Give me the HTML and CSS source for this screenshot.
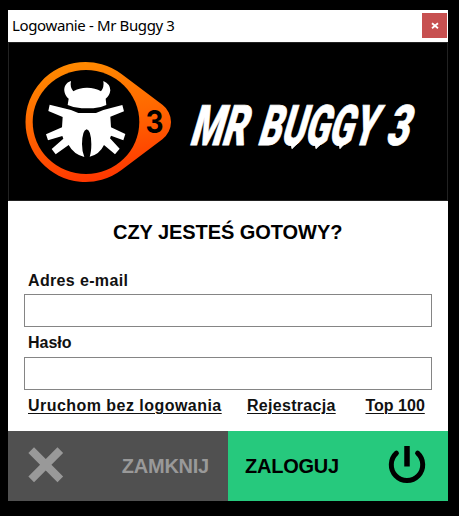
FILE: index.html
```html
<!DOCTYPE html>
<html lang="pl">
<head>
<meta charset="utf-8">
<title>Logowanie - Mr Buggy 3</title>
<link rel="stylesheet" href="styles.css">
</head>
<body>
<main class="window">
  <header class="titlebar">
    <span class="title">Logowanie - Mr Buggy 3</span>
    <button class="close" aria-label="Zamknij okno"><svg width="8" height="8" viewBox="0 0 8 8"><path d="M1 1.3 7 6.3M7 1.3 1 6.3" stroke="#fff" stroke-width="1.8"/></svg></button>
  </header>
  <svg class="banner" width="440" height="159" viewBox="8 42 440 159">
    <defs>
      <linearGradient id="flame" gradientUnits="userSpaceOnUse" x1="75" y1="62" x2="95" y2="182">
        <stop offset="0" stop-color="#ff8a00"/><stop offset=".5" stop-color="#ff6500"/><stop offset="1" stop-color="#ff3600"/>
      </linearGradient>
    </defs>
    <path fill="url(#flame)" d="M121.500 74A60 60 0 1 0 121.500 170L162.400 139.200A21.500 21.500 0 0 0 162.400 104.800Z"/>
    <ellipse cx="86" cy="122" rx="53.300" ry="52"/>
    <g transform="translate(10 50) scale(.33333)" fill="#fff">
      <path d="M183 93C168 98 162 109 163 123Q165 138 176 146L173 165Q192 174 215 175H250Q273 173 289 165L287 146Q299 138 301 121Q301 102 280 93Q283 112 273 124Q256 113 231 113Q207 113 190 124Q179 111 183 93Z"/>
      <path d="M119 164L183 180L205 189H258L280 180L337 165L342 184L301 200L303 232L346 252L340 271L303 257L300 265L329 296L315 313L282 285Q269 313 239 320Q244 306 244 282Q243 240 230 238Q217 240 216 282Q216 305 223 321Q191 313 176 285L137 313L125 297L160 266L157 258L114 271L108 253L156 232L158 201L115 183Z"/>
    </g>
    <text class="badge" x="145.500" y="133" textLength="18" lengthAdjust="spacingAndGlyphs">3</text>
    <g class="wordmark" transform="translate(0 145.200) skewX(-16.500)">
      <text x="188.500" y="0" textLength="56" lengthAdjust="spacingAndGlyphs">MR</text>
      <text x="256.500" y="0" textLength="117" lengthAdjust="spacingAndGlyphs">BUGGY</text>
      <text x="384.500" y="0" textLength="22.500" lengthAdjust="spacingAndGlyphs">3</text>
      <path d="M290-3L293 3.500 298-3ZM314-3L317 3.500 322-3ZM338-3L341 3.500 345-3Z"/>
    </g>
  </svg>
  <form class="form">
    <h1>CZY JESTEŚ GOTOWY?</h1>
    <label class="email" for="email">Adres e-mail</label>
    <input id="email" type="text">
    <label for="password">Hasło</label>
    <input id="password" type="password">
    <nav class="links">
      <a class="guest" href="#">Uruchom bez logowania</a>
      <a class="register" href="#">Rejestracja</a>
      <a class="top" href="#">Top 100</a>
    </nav>
  </form>
  <footer class="actions">
    <button class="quit">
      <svg width="36" height="36" viewBox="0 0 36 36"><path d="M3.200 3.200 32.300 32.300M32.300 3.200 3.200 32.300" stroke="#999" stroke-width="8"/></svg>
      <span>ZAMKNIJ</span>
    </button>
    <button class="login">
      <span>ZALOGUJ</span>
      <svg width="38" height="38" viewBox="0 0 38 38" fill="none" stroke="#000" stroke-linecap="round"><path d="M8.400 8.200A15.700 15.700 0 1 0 29.600 8.200" stroke-width="5"/><path d="M19 1V21.500" stroke-width="5.500" stroke-linecap="butt"/></svg>
    </button>
  </footer>
</main>
</body>
</html>
```
FILE: styles.css
```css
* { box-sizing: border-box; }
body {
  margin: 0;
  padding: 10px 11px 15px 8px;
  height: 516px;
  overflow: hidden;
  background: #000;
  color: #111;
  font-family: "Liberation Sans", Arial, sans-serif;
}
button { border: 0; padding: 0; font: inherit; }
svg { display: block; overflow: visible; }
.window { width: 440px; height: 491px; background: #fff; }
.titlebar {
  display: flex;
  justify-content: space-between;
  height: 32px;
  padding: 3px 1px 0 4px;
}
.title {
  color: #000;
  font: 15px/25px "Noto Sans", sans-serif;
  letter-spacing: -.37px;
  white-space: nowrap;
}
.close {
  display: grid;
  place-items: center;
  width: 25px;
  height: 25px;
  background: #c75050;
}
.banner { background: #000; box-shadow: inset 0 0 0 1px #222; }
.badge { font: 700 31px Inter, sans-serif; }
.wordmark {
  fill: #fff;
  stroke: #fff;
  stroke-width: .8;
  font: 900 56px Roboto, sans-serif;
}
.form {
  display: flex;
  flex-direction: column;
  height: 230px;
  padding: 17px 16px 0;
}
h1 {
  margin: 0 0 24px 89px;
  height: 28px;
  color: #000;
  font-size: 20px;
  line-height: 28px;
  letter-spacing: -.06px;
  white-space: nowrap;
}
label {
  height: 24px;
  padding: 1px 0 0 4px;
  font: bold 16px/20px "Liberation Sans", sans-serif;
}
.email { letter-spacing: .35px; }
input {
  flex: none;
  width: 408px;
  height: 33px;
  padding: 4px 8px;
  border: 1px solid #858585;
  background: #fff;
  font: 16px "Liberation Sans", sans-serif;
}
input + label { height: 30px; padding-top: 6px; }
.links {
  display: flex;
  padding: 6px 0 0 4px;
  font-weight: bold;
  font-size: 16px;
  line-height: 20px;
  white-space: nowrap;
}
.links a { color: #111; text-underline-offset: 2px; text-decoration-thickness: 1px; }
.guest { width: 219px; letter-spacing: .46px; }
.register { width: 118.500px; letter-spacing: .3px; }
.actions { display: grid; grid-template-columns: 220px 220px; height: 70px; }
.actions button {
  display: flex;
  align-items: center;
  justify-content: space-between;
  font-size: 20px;
  font-weight: bold;
  letter-spacing: -.25px;
}
.quit { padding: 0 19px 0 20px; background: #505050; color: #999; }
.login { padding: 0 22px 0 17px; background: #26c97d; color: #000; }
.actions svg { margin-bottom: 2px; }
.login svg { margin-bottom: 5px; }
```
